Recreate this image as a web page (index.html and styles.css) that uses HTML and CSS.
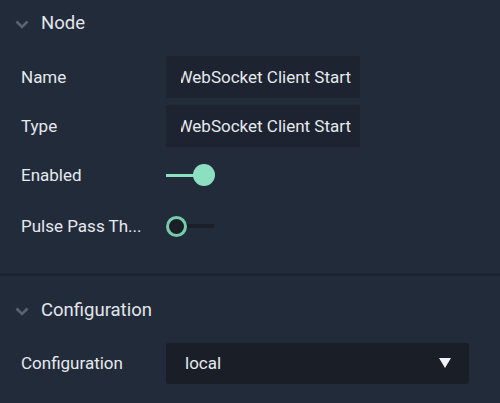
FILE: index.html
```html
<!DOCTYPE html>
<html>
<head>
<meta charset="utf-8">
<link rel="stylesheet" href="styles.css">
</head>
<body>
<div class="panel">
  <section class="section first">
    <div class="header">
      <svg class="chev" width="14" height="9" viewBox="0 0 14 9"><polyline points="1.5,1.5 7,7 12.5,1.5" fill="none" stroke="#5b6371" stroke-width="2.6"/></svg>
      <span class="title">Node</span>
    </div>
    <div class="body">
      <div class="row">
        <div class="label">Name</div>
        <div class="input"><div class="clip"><span>WebSocket Client Start</span></div></div>
      </div>
      <div class="row">
        <div class="label">Type</div>
        <div class="input"><div class="clip"><span>WebSocket Client Start</span></div></div>
      </div>
      <div class="row">
        <div class="label">Enabled</div>
        <div class="toggle on"><div class="track"></div><div class="knob"></div></div>
      </div>
      <div class="row pulse">
        <div class="label">Pulse Pass Th...</div>
        <div class="toggle off"><div class="knob"></div><div class="track"></div></div>
      </div>
    </div>
  </section>
  <section class="section second">
    <div class="header">
      <svg class="chev" width="14" height="9" viewBox="0 0 14 9"><polyline points="1.5,1.5 7,7 12.5,1.5" fill="none" stroke="#5b6371" stroke-width="2.6"/></svg>
      <span class="title">Configuration</span>
    </div>
    <div class="body">
      <div class="row">
        <div class="label">Configuration</div>
        <div class="select"><span>local</span><span class="tri"></span></div>
      </div>
    </div>
  </section>
</div>
</body>
</html>
```

FILE: styles.css
```css
html, body {
  margin: 0;
  padding: 0;
  background: #222b3a;
}
body {
  font-family: Roboto, "Noto Sans", sans-serif;
  font-size: 17px;
  color: #e6e9ee;
  width: 500px;
  height: 403px;
  overflow: hidden;
}
.section.first {
  padding-bottom: 26px;
  border-bottom: 3px solid #1c2330;
}
.section.second {
  padding-top: 11px;
}
.section.second .body {
  padding-top: 9px;
}
.header {
  height: 46px;
  display: flex;
  align-items: center;
  padding-left: 15px;
}
.chev {
  display: block;
  margin-right: 12px;
  margin-top: 2px;
}
.title {
  font-size: 18.5px;
  color: #e2e6ec;
}
.body {
  padding-top: 10px;
  padding-left: 21px;
  display: flex;
  flex-direction: column;
  gap: 7px;
}
.row {
  height: 42px;
  display: flex;
  align-items: center;
}
.row.pulse {
  margin-top: 2px;
}
.label {
  width: 145px;
  flex: none;
}
.input {
  width: 194px;
  height: 42px;
  background: #1d2330;
  display: flex;
  align-items: center;
  padding-left: 15px;
  padding-right: 9px;
  box-sizing: border-box;
}
.clip {
  flex: 1;
  overflow: hidden;
  display: flex;
  justify-content: flex-end;
  white-space: nowrap;
}
.clip span {
  flex: none;
}
.toggle {
  display: flex;
  align-items: center;
  width: 50px;
}
.toggle.on .track {
  width: 30px;
  height: 3px;
  background: #8de0bf;
  margin-right: -3px;
}
.toggle.on .knob {
  width: 22px;
  height: 22px;
  border-radius: 50%;
  background: #8de0bf;
}
.toggle.off .knob {
  width: 21px;
  height: 21px;
  border-radius: 50%;
  box-sizing: border-box;
  border: 3px solid #75cca8;
  background: #1a1e27;
}
.toggle.off .track {
  width: 27px;
  height: 4px;
  background: #1a1f29;
}
.select {
  width: 303px;
  height: 41px;
  background: #1a1e27;
  border-radius: 3px;
  display: flex;
  align-items: center;
  justify-content: space-between;
  padding-left: 19px;
  padding-right: 18px;
  box-sizing: border-box;
}
.tri {
  width: 0;
  height: 0;
  border-left: 6.5px solid transparent;
  border-right: 6.5px solid transparent;
  border-top: 10px solid #f2f3f6;
}
```
